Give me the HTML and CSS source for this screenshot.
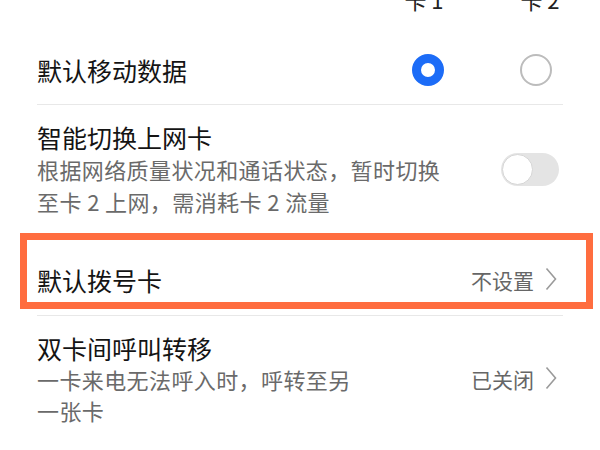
FILE: index.html
```html
<!DOCTYPE html>
<html>
<head>
	<meta name="viewport" content="width=device-width, initial-scale=1">
	<title>双卡管理</title>
<link rel="stylesheet" href="styles.css">
</head>
<body>

<div class="screen">
	<div class="list">

		<div class="head">
			<span class="col">卡 1</span>
			<span class="col">卡 2</span>
		</div>

		<div class="row first">
			<div class="title">默认移动数据</div>
			<div class="radios">
				<span class="radio on"></span>
				<span class="radio"></span>
			</div>
		</div>

		<div class="row two">
			<div class="text wide">
				<div class="title">智能切换上网卡</div>
				<div class="sub">根据网络质量状况和通话状态，暂时切换至卡 2 上网，需消耗卡 2 流量</div>
			</div>
			<span class="switch"><span class="knob"></span></span>
		</div>

		<div class="mark">
			<div class="row picked">
				<div class="title">默认拨号卡</div>
				<div class="value">不设置
					<svg class="arrow" width="12" height="24" viewBox="0 0 12 24"><polyline points="1.5,1.5 10.5,12 1.5,22.5" fill="none" stroke="#9a9a9a" stroke-width="1.6"/></svg>
				</div>
			</div>
		</div>

		<div class="row last">
			<div class="text narrow">
				<div class="title">双卡间呼叫转移</div>
				<div class="sub">一卡来电无法呼入时，呼转至另一张卡</div>
			</div>
			<div class="value">已关闭
				<svg class="arrow" width="12" height="24" viewBox="0 0 12 24"><polyline points="1.5,1.5 10.5,12 1.5,22.5" fill="none" stroke="#9a9a9a" stroke-width="1.6"/></svg>
			</div>
		</div>

	</div>
</div>

</body>
</html>
```

FILE: styles.css
```css
body{
	margin: 0;
	padding: 0;
	background-color: white;
	font-family: "Noto Sans CJK SC", "Noto Sans", sans-serif;
	color: #141414;
}

.screen{
	width: 600px;
	height: 450px;
	overflow: hidden;
	background-color: white;
}

.list{
	padding: 0 37px;
}

.head{
	display: flex;
	justify-content: flex-end;
	gap: 56px;
	height: 21px;
	margin-top: -13px;
	margin-right: -7px;
	font-size: 22px;
	line-height: 24px;
	color: #222;
}

.col{
	width: 60px;
	text-align: center;
}

.row{
	display: flex;
	align-items: center;
	justify-content: space-between;
	box-sizing: border-box;
}

.title{
	font-size: 25px;
	line-height: 32px;
}

.sub{
	font-size: 22px;
	line-height: 32px;
	letter-spacing: 0.4px;
	color: #6a6a6a;
}

.first{
	height: 97px;
	padding-top: 28px;
	border-bottom: 1px solid #e8e8e8;
}

.radios{
	display: flex;
	gap: 76px;
	margin-right: 11px;
}

.radio{
	width: 32px;
	height: 32px;
	box-sizing: border-box;
	border-radius: 50%;
	border: 2px solid #bcbcbc;
}

.radio.on{
	border: 9px solid #1c6cf7;
}

.two{
	padding-top: 16px;
}

.wide{
	width: 412px;
}

.narrow{
	width: 330px;
}

.switch{
	position: relative;
	width: 58px;
	height: 33px;
	margin-right: 4px;
	border-radius: 17px;
	background-color: #e4e4e4;
}

.knob{
	position: absolute;
	left: 1px;
	top: 1px;
	width: 31px;
	height: 31px;
	box-sizing: border-box;
	border-radius: 50%;
	background-color: white;
	border: 1px solid #d6d6d6;
}

.mark{
	margin: 16px -30px 6px -17px;
	border: 7px solid #ff6d3f;
}

.picked{
	height: 62px;
	padding: 24px 29px 6px 10px;
}

.value{
	display: flex;
	align-items: center;
	gap: 11px;
	font-size: 21px;
	color: #666;
}

.arrow{
	display: block;
	margin-top: -3px;
}

.last{
	padding-top: 16px;
	padding-right: 6px;
	border-top: 1px solid #e8e8e8;
}

.last .sub{
	line-height: 31px;
}
```
